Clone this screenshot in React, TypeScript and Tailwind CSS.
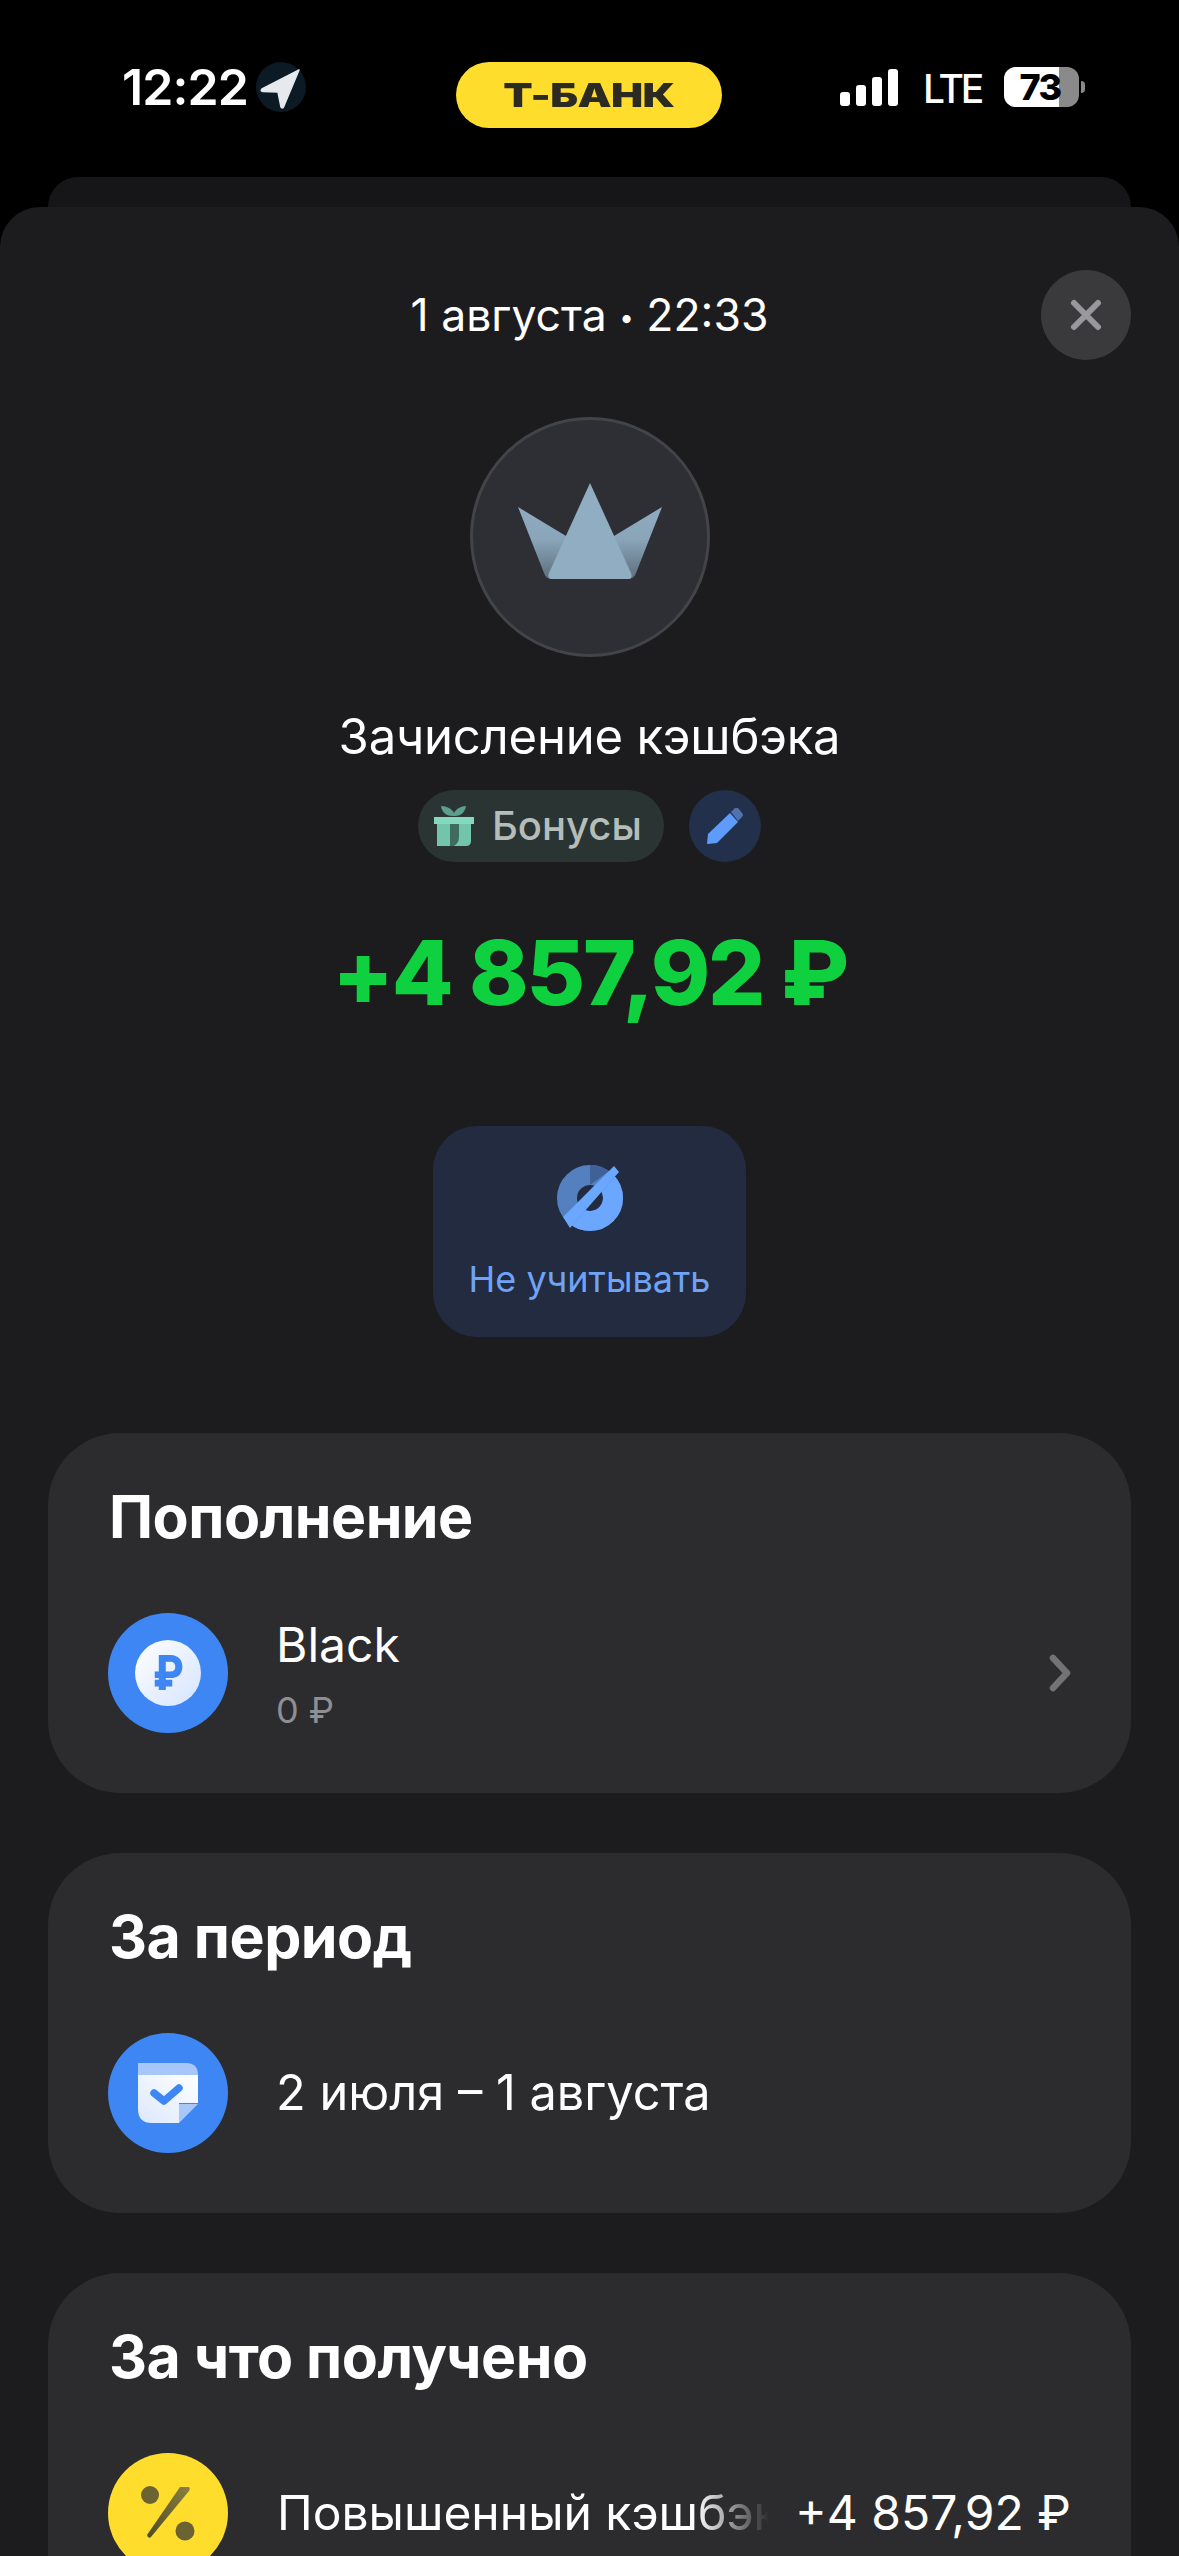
const font = "font-['Inter','Noto_Sans',sans-serif]"

function LocationIcon() {
  return (
    <svg width="50" height="50" viewBox="0 0 50 50" className="ml-[8px] shrink-0">
      <circle cx="25" cy="25" r="25" fill="#0c1a25" />
      <path d="M43 8 L6 27 Q4 29 7 29.5 L22 30 L25 45 Q26 47 27.5 45 Z" fill="#e6eaee" stroke="#e6eaee" strokeWidth="1.5" strokeLinejoin="round" />
    </svg>
  )
}

function StatusBar() {
  return (
    <div className="h-[177px] bg-black">
      <div className="flex items-start pl-[122px] pt-[62px]">
        <div className="flex h-[50px] w-[186px] items-center">
          <span className="text-[50px] leading-[50px] font-semibold tracking-[-0.9px] text-white">12:22</span>
          <LocationIcon />
        </div>
        <div className="ml-[148px] flex h-[66px] w-[266px] items-center justify-center rounded-full bg-[#ffdd2d]">
          <span className="origin-center scale-x-[1.3] text-[33px] leading-none font-black tracking-[-0.5px] text-[#2c2b23]">Т-БАНК</span>
        </div>
        <div className="ml-[118px] mt-[5px] flex h-[40px] items-center">
          <div className="flex items-end gap-[6px]">
            <div className="h-[14px] w-[10px] rounded-[3px] bg-white" />
            <div className="h-[21px] w-[10px] rounded-[3px] bg-white" />
            <div className="h-[29px] w-[10px] rounded-[3px] bg-white" />
            <div className="h-[37px] w-[10px] rounded-[3px] bg-white" />
          </div>
          <span className="ml-[25px] w-[59px] pt-[3px] text-[39px] leading-[40px] font-medium tracking-[-3px] text-white">LTE</span>
          <div className="ml-[22px] flex items-center">
            <div className="relative flex h-[40px] w-[75px] overflow-hidden rounded-[12px] bg-[#8a8a8a]">
              <div className="h-full w-[55px] bg-white" />
              <span className="absolute inset-0 pr-[3px] text-center text-[36px] leading-[40px] font-extrabold tracking-[-1.5px] text-black">73</span>
            </div>
            <div className="ml-[2px] h-[12px] w-[4px] rounded-r-full bg-[#8a8a8a]" />
          </div>
        </div>
      </div>
    </div>
  )
}

function Crown() {
  return (
    <svg width="144" height="96" viewBox="0 0 144 96">
      <defs>
        <linearGradient id="wing" x1="0" y1="0" x2="0" y2="1">
          <stop offset="0" stopColor="#8fabc1" />
          <stop offset="0.45" stopColor="#8aa5b9" />
          <stop offset="1" stopColor="#5c6f7c" />
        </linearGradient>
      </defs>
      <path d="M0 24 L48 53 L96 53 L144 24 L118 90 Q116 96 110 96 L34 96 Q28 96 26 90 Z" fill="url(#wing)" />
      <path d="M72 0 L113 90 Q115 96 110 96 L34 96 Q29 96 31 90 Z" fill="#90adc1" />
    </svg>
  )
}

function GiftIcon() {
  return (
    <svg width="40" height="42" viewBox="0 0 40 42">
      <path d="M19 11 C13 11 8 8 7 1 C13 1 18 4 20 8 C22 4 27 1 32 1 C31 8 26 11 21 11 Z" fill="#5e9e8c" />
      <rect x="0" y="12" width="40" height="7" fill="#84d8bc" />
      <path d="M3 19 H37 V36 Q37 41 32 41 H3 Z" fill="#72c4ab" />
      <path d="M16 19 H25 V32 Q25 38 20 41 H16 Z" fill="#3f6b5f" />
    </svg>
  )
}

function PencilIcon() {
  return (
    <svg width="36" height="36" viewBox="0 0 36 36">
      <path d="M24 4 L28 0 Q30 -1 32 1 L35 5 Q37 7 35 9 L31 13 Z" fill="#4f71ad" />
      <path d="M23 5 L31 14 L10 35 L1 36 Q0 36 0 35 L1 26 Z" fill="#5e9bfa" />
    </svg>
  )
}

function IgnoreIcon() {
  return (
    <svg width="66" height="66" viewBox="0 0 66 66">
      <defs>
        <clipPath id="lower">
          <path d="M62 7 L13 63 L66 80 L80 20 Z" />
        </clipPath>
      </defs>
      <circle cx="33" cy="33" r="23" fill="none" stroke="#5580c0" strokeWidth="20" />
      <path d="M33 0 A33 33 0 0 1 52 6 L33 20 Z" fill="#3f6198" />
      <circle cx="33" cy="33" r="23" fill="none" stroke="#6ba6ff" strokeWidth="20" clipPath="url(#lower)" />
      <path d="M57 1 L62 7 L13 63 L6 52 Z" fill="#6ba6ff" />
    </svg>
  )
}

function CalendarIcon() {
  return (
    <svg width="60" height="60" viewBox="0 0 60 60">
      <defs>
        <linearGradient id="page" x1="0" y1="1" x2="1" y2="0">
          <stop offset="0" stopColor="#dbe8fd" />
          <stop offset="1" stopColor="#ffffff" />
        </linearGradient>
      </defs>
      <path d="M0 12 H60 V40 H41 V60 H14 Q0 60 0 46 Z" fill="url(#page)" />
      <path d="M0 0 H48 Q60 0 60 12 H0 Z" fill="#a7c7fb" />
      <path d="M41 41 H60 L41 60 Z" fill="#a7c7fb" />
      <path d="M16 30 L26 38 L41 25" fill="none" stroke="#3f86f5" strokeWidth="7.5" strokeLinecap="round" strokeLinejoin="round" />
    </svg>
  )
}

function PercentIcon() {
  return (
    <svg width="60" height="60" viewBox="0 0 60 60">
      <defs>
        <linearGradient id="slash" x1="1" y1="0" x2="0" y2="1">
          <stop offset="0" stopColor="#8a8040" />
          <stop offset="1" stopColor="#4f4a26" />
        </linearGradient>
      </defs>
      <ellipse cx="12" cy="12" rx="9" ry="9" fill="#6b6332" />
      <ellipse cx="47" cy="48" rx="9.5" ry="9.5" fill="#6b6332" />
      <path d="M42 4 H50 Q53 4 51 8 L13 54 Q10 56 9 52 Z" fill="url(#slash)" />
    </svg>
  )
}

function Chevron() {
  return (
    <svg width="22" height="38" viewBox="0 0 22 38">
      <path d="M4 4 L18 19 L4 34" fill="none" stroke="#737376" strokeWidth="6.5" strokeLinecap="round" strokeLinejoin="round" />
    </svg>
  )
}

function Card({ title, children }: { title: string; children: React.ReactNode }) {
  return (
    <div className="h-[360px] rounded-[72px] bg-[#2c2c2e] px-[60px] pt-[50px] pb-[60px]">
      <div className="pl-[1px] text-[59px] leading-[68px] font-bold tracking-[-0.5px] text-white">{title}</div>
      <div className="mt-[62px] flex h-[120px] items-center">{children}</div>
    </div>
  )
}

export default function App() {
  return (
    <div className={`h-[2556px] w-[1179px] overflow-hidden bg-black ${font}`}>
      <StatusBar />
      <div className="mx-[48px] h-[30px] rounded-t-[36px] bg-[#161618]" />
      <div className="flex flex-col rounded-t-[40px] bg-[#1c1c1e] px-[48px] pt-[63px]">
        <div className="grid grid-cols-[90px_1fr_90px] items-center">
          <div />
          <div className="text-center text-[44.5px] leading-[90px] text-white">
            1 августа <span className="align-[4px] text-[26px] leading-none">•</span> 22:33
          </div>
          <div className="flex h-[90px] w-[90px] items-center justify-center rounded-full bg-[#3a3a3c]">
            <svg width="32" height="32" viewBox="0 0 32 32">
              <path d="M4 4 L28 28 M28 4 L4 28" stroke="#98989d" strokeWidth="6" strokeLinecap="round" />
            </svg>
          </div>
        </div>

        <div className="mt-[57px] flex h-[240px] w-[240px] items-center justify-center self-center rounded-full border-[3px] border-[#434448] bg-[#2e2f35] pb-[12px]">
          <Crown />
        </div>

        <div className="mt-[50px] text-center text-[49px] leading-[60px] tracking-[-0.2px] text-white">Зачисление кэшбэка</div>

        <div className="mt-[23px] flex items-center justify-center gap-[25px]">
          <div className="flex h-[72px] w-[246px] items-center rounded-full bg-[#2a3432] pl-[16px]">
            <GiftIcon />
            <span className="ml-[18px] text-[40px] leading-[72px] font-medium text-[#b4bdba]">Бонусы</span>
          </div>
          <div className="flex h-[72px] w-[72px] items-center justify-center rounded-full bg-[#22304b]">
            <PencilIcon />
          </div>
        </div>

        <div className="mt-[56px] text-center text-[90px] leading-[110px] font-extrabold tracking-[-2.2px] text-[#0fd13f]">+4 857,92 ₽</div>

        <div className="mt-[98px] flex h-[211px] w-[313px] flex-col items-center self-center rounded-[44px] bg-[#222b3f] pt-[39px]">
          <IgnoreIcon />
          <span className="mt-[25px] text-[36px] leading-[46px] text-[#6fa3f7]">Не учитывать</span>
        </div>

        <div className="mt-[96px] flex flex-col gap-[60px]">
          <Card title="Пополнение">
            <div className="flex h-[120px] w-[120px] shrink-0 items-center justify-center rounded-full bg-[#3f86f5]">
              <div className="flex h-[66px] w-[66px] items-center justify-center rounded-full bg-gradient-to-br from-white to-[#d5e4fd]">
                <span className="scale-x-[0.85] text-[48px] leading-none font-extrabold text-[#3f86f5]">₽</span>
              </div>
            </div>
            <div className="ml-[48px] flex flex-col">
              <span className="text-[48px] leading-[60px] text-white">Black</span>
              <span className="mt-[13px] text-[36px] leading-[44px] text-[#8e8e93]">0 ₽</span>
            </div>
            <div className="ml-auto">
              <Chevron />
            </div>
          </Card>

          <Card title="За период">
            <div className="flex h-[120px] w-[120px] shrink-0 items-center justify-center rounded-full bg-[#3f86f5]">
              <CalendarIcon />
            </div>
            <span className="ml-[48px] text-[48.7px] leading-[60px] text-white">2 июля – 1 августа</span>
          </Card>

          <Card title="За что получено">
            <div className="flex h-[120px] w-[120px] shrink-0 items-center justify-center rounded-full bg-[#ffdd2d]">
              <PercentIcon />
            </div>
            <div className="ml-[49px] w-[492px] overflow-hidden whitespace-nowrap text-[48px] leading-[60px] text-white [mask-image:linear-gradient(to_right,black_85%,transparent)]">Повышенный кэшбэк</div>
            <span className="ml-auto whitespace-nowrap text-[48px] leading-[60px] text-white">+4 857,92 ₽</span>
          </Card>
        </div>
      </div>
    </div>
  )
}
